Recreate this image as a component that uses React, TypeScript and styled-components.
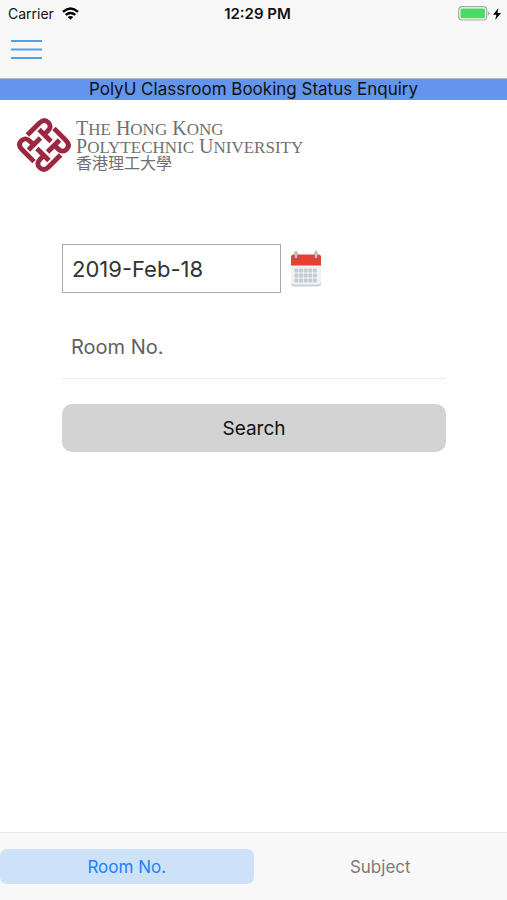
import React, { useState } from "react";
import styled, { createGlobalStyle } from "styled-components";

const GlobalStyle = createGlobalStyle`
  *, *::before, *::after { box-sizing: border-box; }
  body { margin: 0; background: #fff; color: #111; font-family: Inter, "Liberation Sans", sans-serif; }
  button, input { font-family: inherit; }
`;

const Screen = styled.div`
  display: flex;
  flex-direction: column;
  min-height: 100vh;
`;

const StatusBar = styled.div`
  display: grid;
  grid-template-columns: 1fr auto 1fr;
  align-items: center;
  height: 27px;
  padding: 0 6px 0 8px;
  background: #f8f8f8;
  font-size: 14px;
`;

const StatusSide = styled.div<{ $end?: boolean }>`
  display: flex;
  align-items: center;
  gap: ${(p) => (p.$end ? 3 : 8)}px;
  justify-content: ${(p) => (p.$end ? "flex-end" : "flex-start")};
`;

const Clock = styled.time`
  padding-left: 6px;
  font-size: 15px;
  font-weight: 600;
`;

const NavBar = styled.nav`
  height: 52px;
  padding: 9px 8px;
  background: #f8f8f8;
  border-bottom: 1px solid #b4b9c6;
`;

const MenuButton = styled.button`
  display: flex;
  padding: 2px;
  border: 0;
  background: none;
`;

const TitleBar = styled.h1`
  margin: 0;
  background: #6495ed;
  font-size: 17px;
  line-height: 21px;
  font-weight: 400;
  text-align: center;
`;

const Brand = styled.div`
  display: flex;
  gap: 4px;
  padding: 17px 16px 0;
`;

const BrandText = styled.div`
  padding-top: 3px;
  color: #707070;
  font-family: "Liberation Serif", "Noto Sans CJK TC", serif;
  line-height: 17px;
`;

const BrandLine = styled.div`
  font-size: 20px;
  white-space: nowrap;
`;

const SmallCaps = styled.span`
  font-size: 17px;
`;

const BrandChinese = styled.div`
  font-size: 16px;
  line-height: 15px;
`;

const Form = styled.form`
  display: flex;
  flex-direction: column;
  flex: 1;
  padding: 71px 61px 0 62px;
`;

const DateRow = styled.div`
  display: flex;
  align-items: center;
  gap: 9px;
`;

const DateInput = styled.input`
  width: 57%;
  height: 49px;
  padding: 0 9px;
  border: 1px solid #aaa;
  border-radius: 0;
  background: #fff;
  color: #333;
  font-size: 22px;
`;

const IconButton = styled.button`
  display: flex;
  padding: 0;
  border: 0;
  background: none;
`;

const RoomInput = styled.input`
  height: 64px;
  margin: 22px 0 25px;
  padding: 0 9px;
  border: 0;
  border-bottom: 1px solid #eee;
  background: none;
  color: #333;
  font-size: 20px;
  &::placeholder { color: #606060; opacity: 1; }
`;

const SearchButton = styled.button`
  height: 48px;
  border: 0;
  border-radius: 10px;
  background: #d3d3d3;
  color: #111;
  font-size: 19px;
`;

const TabBar = styled.div`
  display: flex;
  height: 68px;
  padding: 16px 0;
  border-top: 1px solid #e8e8e8;
  background: #f8f8f8;
`;

const Tab = styled.button<{ $active: boolean }>`
  flex: 1;
  border: 0;
  border-radius: 7px;
  background: ${(p) => (p.$active ? "#cde1f8" : "transparent")};
  color: ${(p) => (p.$active ? "#2080fc" : "#7b7b7b")};
  font-size: 17px;
`;

const WifiIcon = () => (
  <svg width="17" height="13" viewBox="0 0 17 13" fill="none" stroke="#000" strokeWidth="2.4" aria-hidden="true">
    <path d="M1 4.8Q8.500-1.700 16 4.800" />
    <path d="M3.700 7.900Q8.500 3.900 13.300 7.900" />
    <path d="M8.500 12.800L5.700 10Q8.500 7.800 11.300 10Z" fill="#000" stroke="none" />
  </svg>
);

const BatteryIcon = () => (
  <svg width="32" height="15" viewBox="0 0 32 15" aria-hidden="true">
    <rect x="0.700" y="0.700" width="28" height="13.300" rx="3.200" fill="#f8f8f8" stroke="#a8a8a8" strokeWidth="1.200" />
    <rect x="2.500" y="2.500" width="24.400" height="9.700" rx="1.200" fill="#4cd964" />
    <path d="M30 5.200Q31.600 6 31.600 7.400T30 9.600Z" fill="#a8a8a8" />
  </svg>
);

const BoltIcon = () => (
  <svg width="8" height="12" viewBox="0 0 8 12" aria-hidden="true">
    <path d="M5.500 0L0 6.700H3.400L2.200 12L8 5H4.400Z" fill="#000" />
  </svg>
);

const MenuIcon = () => (
  <svg width="32" height="24" viewBox="0 0 32 24" stroke="#4da3ea" strokeWidth="2" aria-hidden="true">
    <path d="M1 3H32M1 11.500H32M1 20H32" />
  </svg>
);

const KnotArm = () => (
  <path d="M-4.700 -18.800H12Q19 -18.800 19 -13T12.500 -7.300H7.500M7.500 -14.500V2.500" />
);

const KnotLogo = () => (
  <svg width="56" height="56" viewBox="-28 -28 56 56" fill="none" stroke="#9c2740" strokeWidth="4.900" role="img" aria-label="The Hong Kong Polytechnic University">
    <g transform="rotate(-45)">
      {[0, 90, 180, 270].map((angle) => (
        <g key={angle} transform={`rotate(${angle})`}>
          <KnotArm />
        </g>
      ))}
    </g>
  </svg>
);

const CalendarIcon = () => (
  <svg width="32" height="36" viewBox="0 0 32 36" aria-hidden="true">
    <rect x="1" y="4" width="30" height="31.500" rx="3" fill="#cbd0d3" />
    <rect x="1" y="4" width="30" height="29.500" rx="3" fill="#f0f2f3" />
    <path d="M1 14.500V6Q1 3.500 3.500 3.500H28.500Q31 3.500 31 6V14.500Z" fill="#e63f34" />
    {[18.5, 23.5, 28.5].map((y) =>
      [4.5, 9.1, 13.7, 18.3, 22.900].map((x) => (
        <rect key={`${x}-${y}`} x={x} y={y - 1} width="3.900" height="4" rx="1" fill="#c3ccd3" />
      ))
    )}
    {[6, 26].map((x) => (
      <g key={x}>
        <circle cx={x} cy="6.500" r="2" fill="#a7352f" />
        <rect x={x - 1.3} y="0.500" width="2.600" height="7" rx="1.300" fill="#c6cacc" stroke="#888" strokeWidth="0.500" />
      </g>
    ))}
  </svg>
);

const App = () => {
  const [tab, setTab] = useState("Room No.");
  return (
    <Screen>
      <GlobalStyle />
      <StatusBar>
        <StatusSide>Carrier <WifiIcon /></StatusSide>
        <Clock>12:29 PM</Clock>
        <StatusSide $end><BatteryIcon /><BoltIcon /></StatusSide>
      </StatusBar>
      <NavBar>
        <MenuButton type="button" aria-label="Menu"><MenuIcon /></MenuButton>
      </NavBar>
      <TitleBar>PolyU Classroom Booking Status Enquiry</TitleBar>
      <Brand>
        <KnotLogo />
        <BrandText>
          <BrandLine>T<SmallCaps>HE</SmallCaps> H<SmallCaps>ONG</SmallCaps> K<SmallCaps>ONG</SmallCaps></BrandLine>
          <BrandLine>P<SmallCaps>OLYTECHNIC</SmallCaps> U<SmallCaps>NIVERSITY</SmallCaps></BrandLine>
          <BrandChinese lang="zh-Hant">香港理工大學</BrandChinese>
        </BrandText>
      </Brand>
      <Form onSubmit={(e) => e.preventDefault()}>
        <DateRow>
          <DateInput aria-label="Date" defaultValue="2019-Feb-18" />
          <IconButton type="button" aria-label="Choose date"><CalendarIcon /></IconButton>
        </DateRow>
        <RoomInput aria-label="Room No." placeholder="Room No." />
        <SearchButton type="submit">Search</SearchButton>
      </Form>
      <TabBar role="tablist">
        {["Room No.", "Subject"].map((name) => (
          <Tab key={name} type="button" role="tab" aria-selected={tab === name} $active={tab === name} onClick={() => setTab(name)}>
            {name}
          </Tab>
        ))}
      </TabBar>
    </Screen>
  );
};

export default App;
